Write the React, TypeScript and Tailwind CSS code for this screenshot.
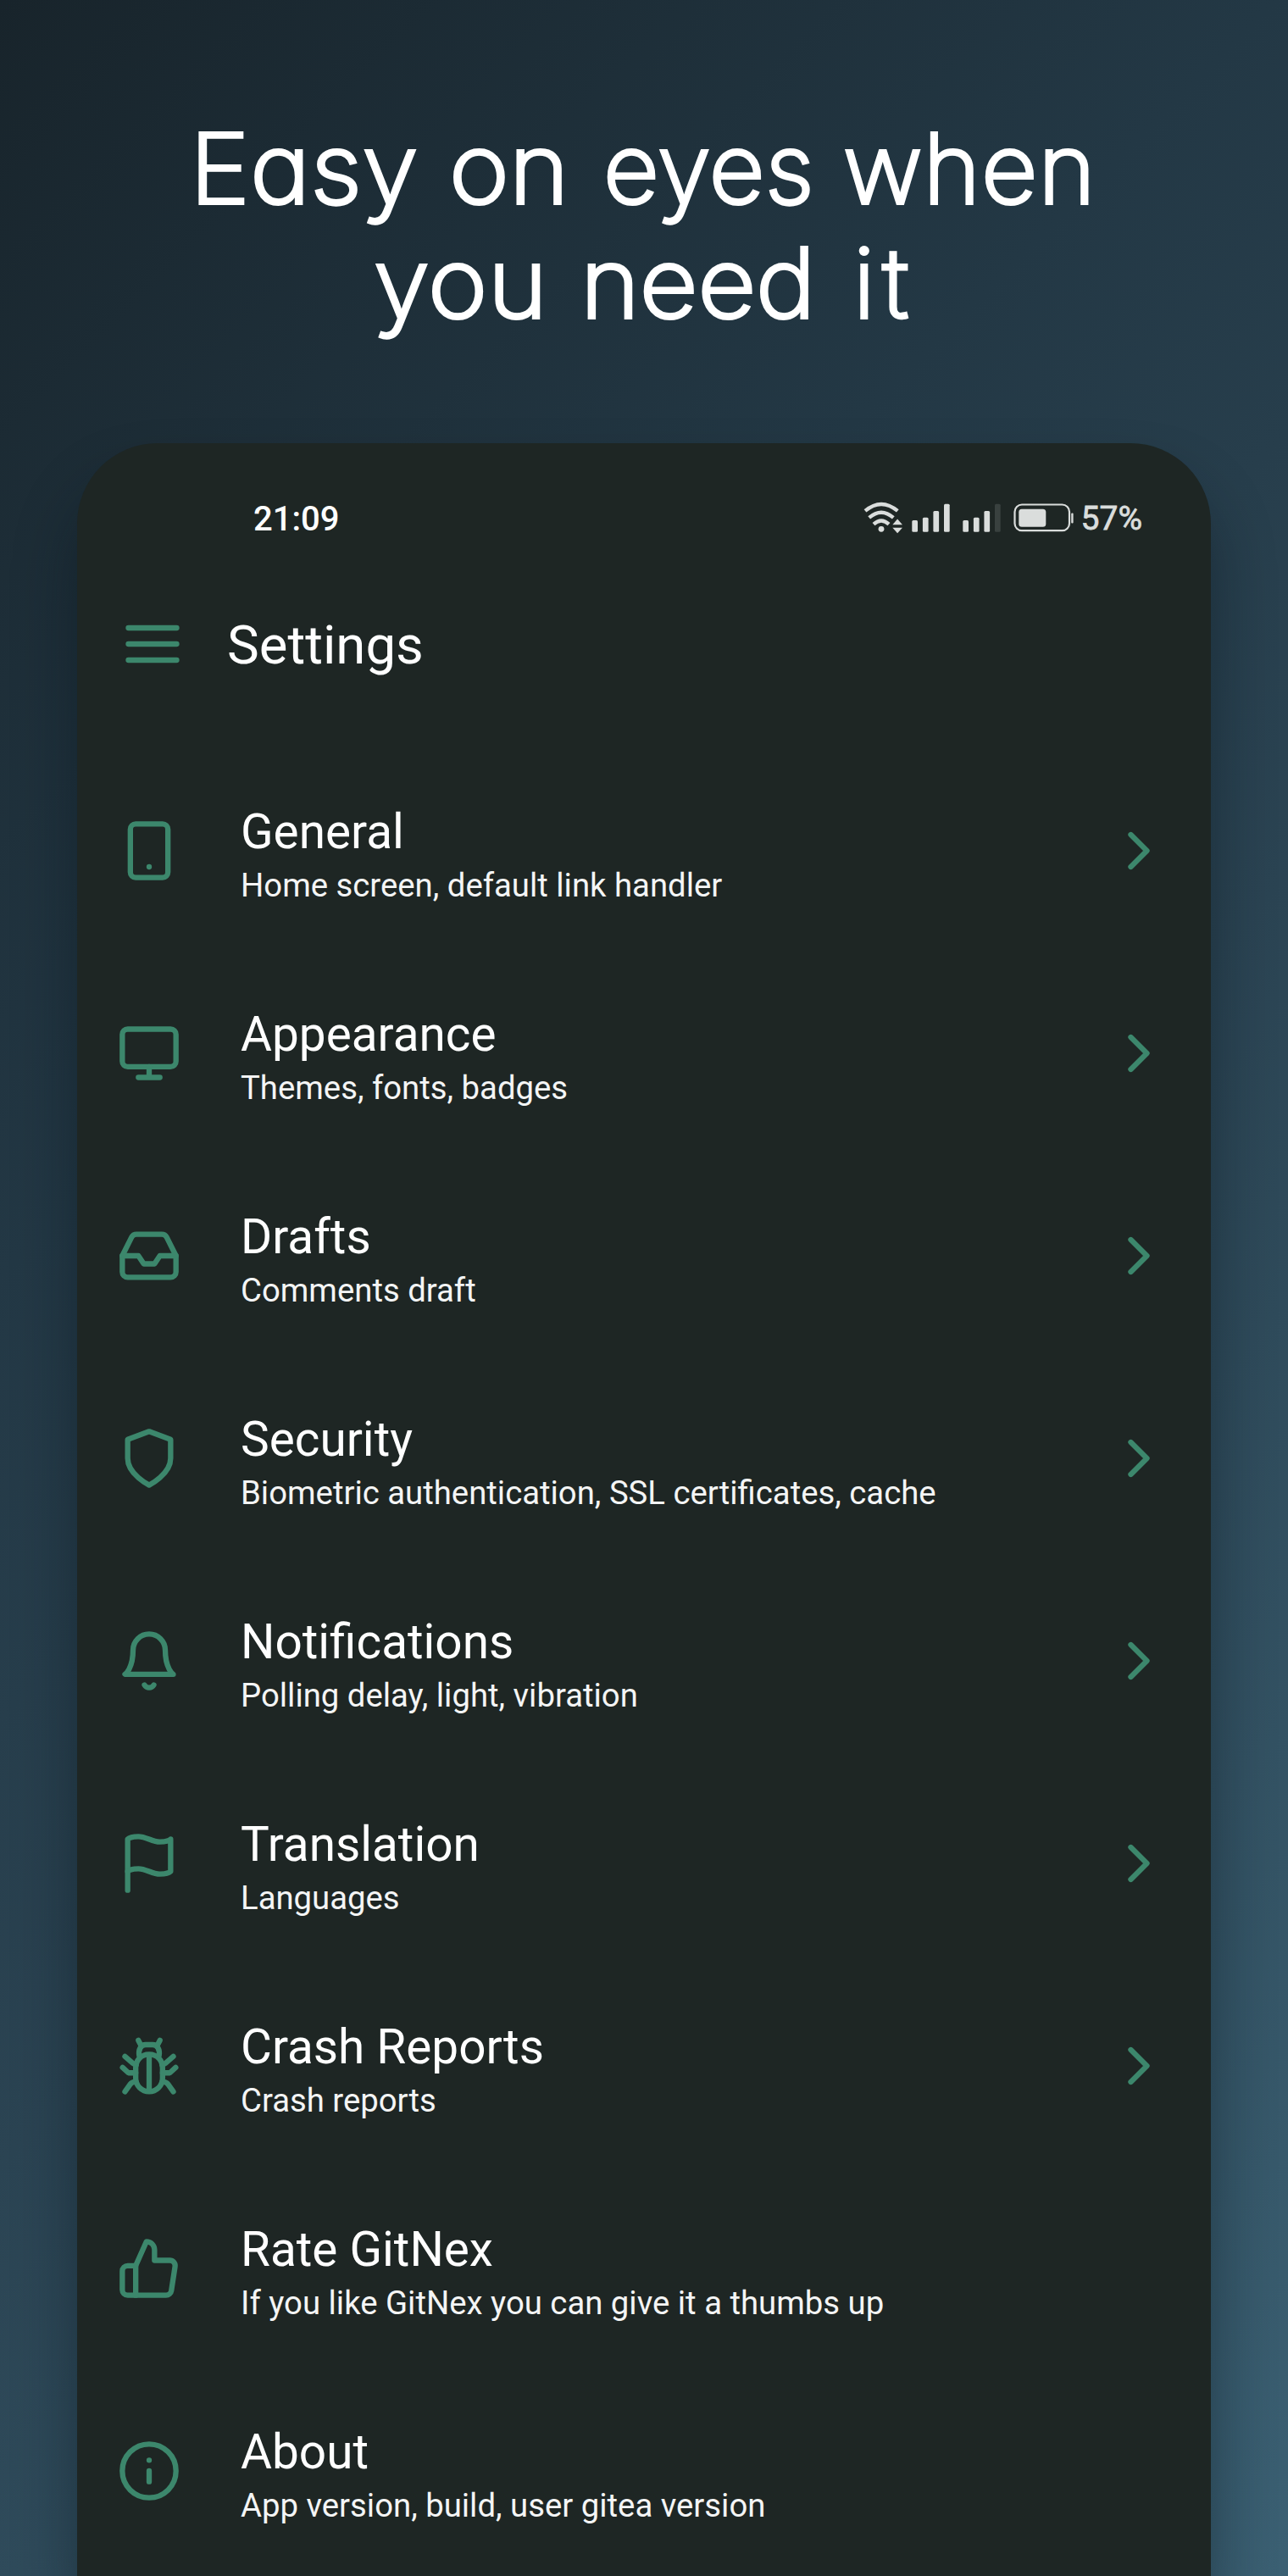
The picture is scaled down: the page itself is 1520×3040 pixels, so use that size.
import React from "react";

type IconProps = { children: React.ReactNode; className?: string };

function Icon({ children, className = "" }: IconProps) {
  return (
    <svg
      viewBox="0 0 24 24"
      fill="none"
      stroke="currentColor"
      strokeWidth={2}
      strokeLinecap="round"
      strokeLinejoin="round"
      className={"size-[76px] shrink-0 text-[#3c876c] " + className}
    >
      {children}
    </svg>
  );
}

type Item = { title: string; detail: string; icon: React.ReactNode; arrow: boolean };

const items: Item[] = [
  {
    title: "General",
    detail: "Home screen, default link handler",
    arrow: true,
    icon: (
      <>
        <rect x="5" y="2" width="14" height="20" rx="2" />
        <path d="M12 18h.01" />
      </>
    ),
  },
  {
    title: "Appearance",
    detail: "Themes, fonts, badges",
    arrow: true,
    icon: (
      <>
        <rect x="2" y="3" width="20" height="14" rx="2" />
        <path d="M8 21h8M12 17v4" />
      </>
    ),
  },
  {
    title: "Drafts",
    detail: "Comments draft",
    arrow: true,
    icon: (
      <>
        <path d="M22 12h-6l-2 3h-4l-2-3H2" />
        <path d="M5.45 5.11 2 12v6a2 2 0 0 0 2 2h16a2 2 0 0 0 2-2v-6l-3.45-6.89A2 2 0 0 0 16.76 4H7.24a2 2 0 0 0-1.79 1.11z" />
      </>
    ),
  },
  {
    title: "Security",
    detail: "Biometric authentication, SSL certificates, cache",
    arrow: true,
    icon: <path d="M12 22s8-4 8-10V5l-8-3-8 3v7c0 6 8 10 8 10z" />,
  },
  {
    title: "Notifications",
    detail: "Polling delay, light, vibration",
    arrow: true,
    icon: (
      <>
        <path d="M18 8A6 6 0 0 0 6 8c0 7-3 9-3 9h18s-3-2-3-9" />
        <path d="M13.73 21a2 2 0 0 1-3.46 0" />
      </>
    ),
  },
  {
    title: "Translation",
    detail: "Languages",
    arrow: true,
    icon: (
      <>
        <path d="M4 15s1-1 4-1 5 2 8 2 4-1 4-1V3s-1 1-4 1-5-2-8-2-4 1-4 1z" />
        <path d="M4 22v-7" />
      </>
    ),
  },
  {
    title: "Crash Reports",
    detail: "Crash reports",
    arrow: true,
    icon: (
      <>
        <path d="M12 7.7c-3 0-5 2.2-5 5.1v3.8a5 5 0 0 0 10 0v-3.8c0-2.900-2-5.100-5-5.100z" />
        <path d="M12 8v13" />
        <path d="M8.300 8.200C7.900 6 8.900 4.100 10.700 4.100h2.600c1.800 0 2.800 1.900 2.400 4.100" />
        <path d="M8 2.500l1 1.900M16 2.500l-1 1.900" />
        <path d="M3 8.500l3 2.600q.5.400 1.200.4M21 8.500l-3 2.600q-.5.400-1.200.4" />
        <path d="M2.100 12.600l2.200 2H7M21.900 12.600l-2.200 2H17" />
        <path d="M3 21.600l1.900-2.700q.7-1 2.200-1M21 21.600l-1.900-2.700q-.7-1-2.200-1" />
      </>
    ),
  },
  {
    title: "Rate GitNex",
    detail: "If you like GitNex you can give it a thumbs up",
    arrow: false,
    icon: (
      <>
        <path d="M14 9V5a3 3 0 0 0-3-3l-4 9v11h11.280a2 2 0 0 0 2-1.700l1.380-9a2 2 0 0 0-2-2.300z" />
        <path d="M7 22H4a2 2 0 0 1-2-2v-7a2 2 0 0 1 2-2h3" />
      </>
    ),
  },
  {
    title: "About",
    detail: "App version, build, user gitea version",
    arrow: false,
    icon: (
      <>
        <circle cx="12" cy="12" r="10" />
        <path d="M12 16v-4M12 8h.01" />
      </>
    ),
  },
];

function Wifi() {
  return (
    <svg viewBox="0 0 48 40" className="h-10 w-12" fill="none" stroke="currentColor" strokeWidth={4.3}>
      <path d="M3 10.900Q22-5.100 41.300 10.900" />
      <path d="M7.700 18.900Q22 6.500 36.300 18.900" />
      <path d="M13 26.600Q22 18.200 31 26.600" />
      <circle cx="22" cy="32.300" r="3.400" fill="currentColor" stroke="none" />
      <path d="M35.300 27.300h11.700l-5.900-6.800zM35.300 30.700h11.700l-5.900 6.500z" fill="currentColor" stroke="none" />
    </svg>
  );
}

function Signal({ weak = false }: { weak?: boolean }) {
  return (
    <svg viewBox="0 0 45 40" className="h-10 w-[45px]" fill="currentColor">
      <rect x="0.300" y="22" width="6.700" height="13.700" rx="1.500" />
      <rect x="12.900" y="18.700" width="6.700" height="17" rx="1.500" />
      <rect x="25.400" y="11" width="6.700" height="24.700" rx="1.500" />
      <rect x="38" y="2.700" width="6.700" height="33" rx="1.500" opacity={weak ? 0.15 : 1} />
    </svg>
  );
}

function Battery() {
  return (
    <svg viewBox="0 0 72 40" className="h-10 w-[72px]" fill="none" stroke="currentColor">
      <rect x="1.500" y="3.500" width="64.500" height="30.700" rx="8.500" strokeWidth={2.2} />
      <rect x="6.300" y="8.700" width="32" height="21" rx="3.500" fill="currentColor" stroke="none" />
      <rect x="68.200" y="13.500" width="2.400" height="12" rx="1" fill="currentColor" stroke="none" />
    </svg>
  );
}

export default function App() {
  return (
    <div className="flex h-[3040px] w-[1520px] flex-col overflow-hidden bg-[linear-gradient(135deg,#18242b_0%,#233845_33%,#2b4453_56%,#3b6073_100%)] font-['Roboto',sans-serif] text-white">
      <h1 className="flex h-[523px] shrink-0 flex-col pt-[131px] font-['Inter',sans-serif] text-[114px] leading-[135px] font-extralight whitespace-nowrap text-white [-webkit-text-stroke:4px_white] [font-feature-settings:'cv11']">
        <span className="flex pl-[224px]">
          <span className="w-[306px] origin-left scale-x-[1.05] tracking-[0.5px]">Easy </span>
          <span className="w-[182px] origin-left scale-x-[1.06]">on </span>
          <span className="w-[283px] tracking-[0.5px]">eyes </span>
          <span className="origin-left scale-x-[1.01] tracking-[1px]">when</span>
        </span>
        <span className="flex pl-[441px]">
          <span className="w-[244px] origin-left scale-x-[1.05] tracking-[0.5px]">you </span>
          <span className="w-[322px] origin-left scale-x-[1.045]">need </span>
          <span className="tracking-[9px]">it</span>
        </span>
      </h1>

      <main className="ml-[91px] flex w-[1338px] grow flex-col rounded-t-[95px] bg-[#1e2624] shadow-[0_50px_72px_0px_rgba(8,20,28,0.46)]">
        <div className="flex h-[178px] shrink-0 items-center justify-between pr-[81px] pl-[208px] text-[40px] leading-none">
          <span className="pt-px font-medium">21:09</span>
          <div className="flex items-center text-[#dadddc]">
            <Wifi />
            <div className="ml-[10px] flex gap-[15px]">
              <Signal />
              <Signal weak />
            </div>
            <div className="ml-[15px]">
              <Battery />
            </div>
            <span className="ml-2 text-[39px] [-webkit-text-stroke:0.8px_#dadddc]">57%</span>
          </div>
        </div>

        <header className="flex h-[117px] shrink-0 items-center pl-[51px]">
          <Icon>
            <path d="M3 6h18M3 12h18M3 18h18" />
          </Icon>
          <h2 className="ml-[50px] pt-[5px] text-[63.5px] leading-none">Settings</h2>
        </header>

        <ul className="mt-[66px]">
          {items.map((item) => (
            <li key={item.title} className="flex h-[239px] items-center pr-[47px] pl-[47px]">
              <Icon>{item.icon}</Icon>
              <div className="ml-[70px] grow pt-[19px]">
                <div className="text-[56.7px] leading-[64px]">{item.title}</div>
                <div className="text-[38.3px] leading-[62px] text-[#f4f5f5]">{item.detail}</div>
              </div>
              {item.arrow && (
                <Icon>
                  <path d="M9 18 15 12 9 6" />
                </Icon>
              )}
            </li>
          ))}
        </ul>
      </main>
    </div>
  );
}
